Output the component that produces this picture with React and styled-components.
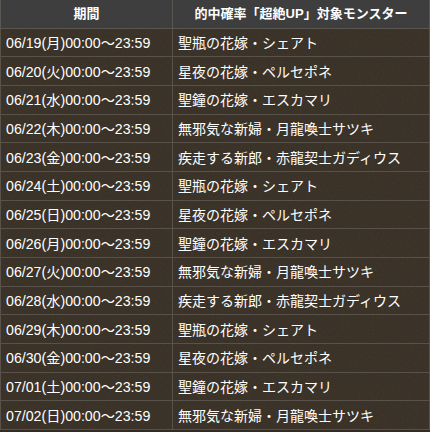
import React from 'react';
import styled, { createGlobalStyle } from 'styled-components';

const GlobalStyle = createGlobalStyle`
  html, body {
    margin: 0;
    padding: 0;
    background: #322b23;
  }
  body {
    font-family: "Liberation Sans", "Noto Sans CJK JP", sans-serif;
    overflow: hidden;
  }
`;

const noise = `url("data:image/svg+xml;utf8,<svg xmlns='http://www.w3.org/2000/svg' width='160' height='160'><filter id='n'><feTurbulence type='fractalNoise' baseFrequency='0.9' numOctaves='2' stitchTiles='stitch'/><feColorMatrix values='0 0 0 0 0.1  0 0 0 0 0.08  0 0 0 0 0.05  0 0 0 0.35 0'/></filter><rect width='100%' height='100%' filter='url(%23n)'/></svg>")`;

const Table = styled.table`
  width: 430px;
  border-collapse: collapse;
  table-layout: fixed;
  background-color: #352d24;
  background-image: ${noise};
  color: #fff;
`;

const HeadRow = styled.tr`
  height: 28px;
`;

const Row = styled.tr`
  height: 28.7px;
`;

const HeadCell = styled.th`
  padding: 0 0 2px;
  background: #3e3e3e;
  border: 1px solid #5a5651;
  border-top: none;
  font-size: 13px;
  font-weight: bold;
  text-align: center;
  font-family: "Liberation Sans", "Noto Sans CJK JP", sans-serif;
  width: ${(p) => p.$w || 'auto'};
`;

const Cell = styled.td`
  padding: 0 0 1px 5px;
  border: 1px solid #59524a;
  font-size: ${(p) => p.$size || '14px'};
  white-space: nowrap;
  font-family: "Liberation Sans", "Noto Sans CJK JP", sans-serif;
`;

const rows = [
  ['06/19(月)00:00〜23:59', '聖瓶の花嫁・シェアト'],
  ['06/20(火)00:00〜23:59', '星夜の花嫁・ペルセポネ'],
  ['06/21(水)00:00〜23:59', '聖鐘の花嫁・エスカマリ'],
  ['06/22(木)00:00〜23:59', '無邪気な新婦・月龍喚士サツキ'],
  ['06/23(金)00:00〜23:59', '疾走する新郎・赤龍契士ガディウス'],
  ['06/24(土)00:00〜23:59', '聖瓶の花嫁・シェアト'],
  ['06/25(日)00:00〜23:59', '星夜の花嫁・ペルセポネ'],
  ['06/26(月)00:00〜23:59', '聖鐘の花嫁・エスカマリ'],
  ['06/27(火)00:00〜23:59', '無邪気な新婦・月龍喚士サツキ'],
  ['06/28(水)00:00〜23:59', '疾走する新郎・赤龍契士ガディウス'],
  ['06/29(木)00:00〜23:59', '聖瓶の花嫁・シェアト'],
  ['06/30(金)00:00〜23:59', '星夜の花嫁・ペルセポネ'],
  ['07/01(土)00:00〜23:59', '聖鐘の花嫁・エスカマリ'],
  ['07/02(日)00:00〜23:59', '無邪気な新婦・月龍喚士サツキ'],
];

const App = () => (
  <>
    <GlobalStyle />
    <Table>
      <thead>
        <HeadRow>
          <HeadCell $w="171px">期間</HeadCell>
          <HeadCell>的中確率「超絶UP」対象モンスター</HeadCell>
        </HeadRow>
      </thead>
      <tbody>
        {rows.map(([date, name]) => (
          <Row key={date}>
            <Cell $size="14.2px">{date}</Cell>
            <Cell>{name}</Cell>
          </Row>
        ))}
      </tbody>
    </Table>
  </>
);

export default App;
